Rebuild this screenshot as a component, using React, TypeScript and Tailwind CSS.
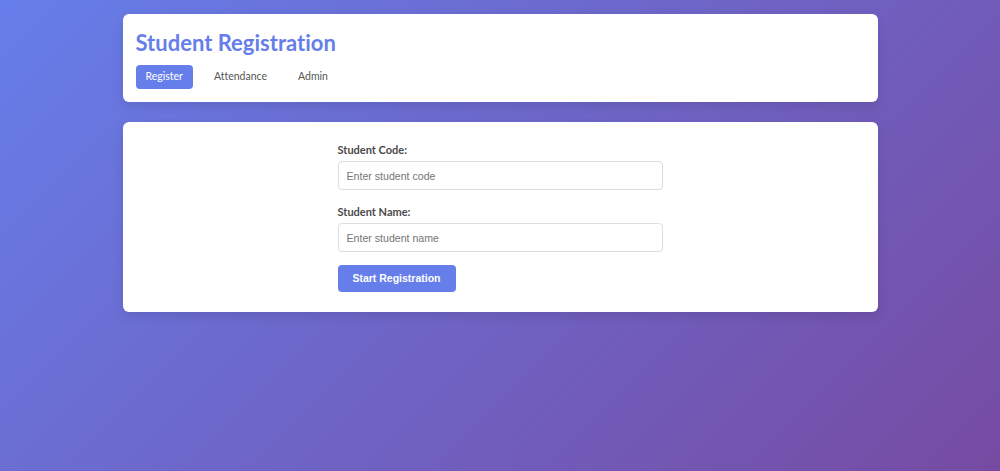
export default function App() {
  return (
    <div className="min-h-[471px] w-full bg-[linear-gradient(135deg,#667eea_0%,#764ba2_100%)] pt-[14px] pb-10 [font-variant-ligatures:none]" style={{ fontFamily: 'Lato, "Open Sans", sans-serif' }}>
      <div className="mx-auto w-[755px] flex flex-col gap-5">
        <div className="bg-white rounded-md px-[13px] pt-[14px] pb-[13px] shadow-[0_4px_12px_rgba(0,0,0,0.1)]">
          <h1 className="text-[22px] font-bold text-[#667eea] leading-[30px]">Student Registration</h1>
          <div className="mt-[7px] flex items-center gap-[11px] text-[10.5px] text-[#555]">
            <button className="h-6 px-[10px] rounded bg-[#667eea] text-white">Register</button>
            <button className="h-6 px-[10px] rounded">Attendance</button>
            <button className="h-6 px-[10px] rounded">Admin</button>
          </div>
        </div>
        <div className="bg-white rounded-md pt-[20px] pb-[20px] shadow-[0_4px_12px_rgba(0,0,0,0.1)]">
          <div className="mx-auto w-[325px] flex flex-col">
            <label className="text-[11px] font-bold text-[#4a4a4a] leading-4 mb-[3px]">Student Code:</label>
            <input className="h-[29px] border border-[#ddd] rounded px-2 text-[10.6px] outline-none placeholder:text-[#757575]" style={{ fontFamily: '"Liberation Sans", Arial, sans-serif' }} placeholder="Enter student code" />
            <label className="text-[11px] font-bold text-[#4a4a4a] leading-4 mt-[14px] mb-[3px]">Student Name:</label>
            <input className="h-[29px] border border-[#ddd] rounded px-2 text-[10.6px] outline-none placeholder:text-[#757575]" style={{ fontFamily: '"Liberation Sans", Arial, sans-serif' }} placeholder="Enter student name" />
            <button className="mt-[13px] self-start w-[118px] h-[27px] rounded bg-[#667eea] text-white text-[10.5px] font-bold" style={{ fontFamily: '"Liberation Sans", Arial, sans-serif' }}>Start Registration</button>
          </div>
        </div>
      </div>
    </div>
  );
}
